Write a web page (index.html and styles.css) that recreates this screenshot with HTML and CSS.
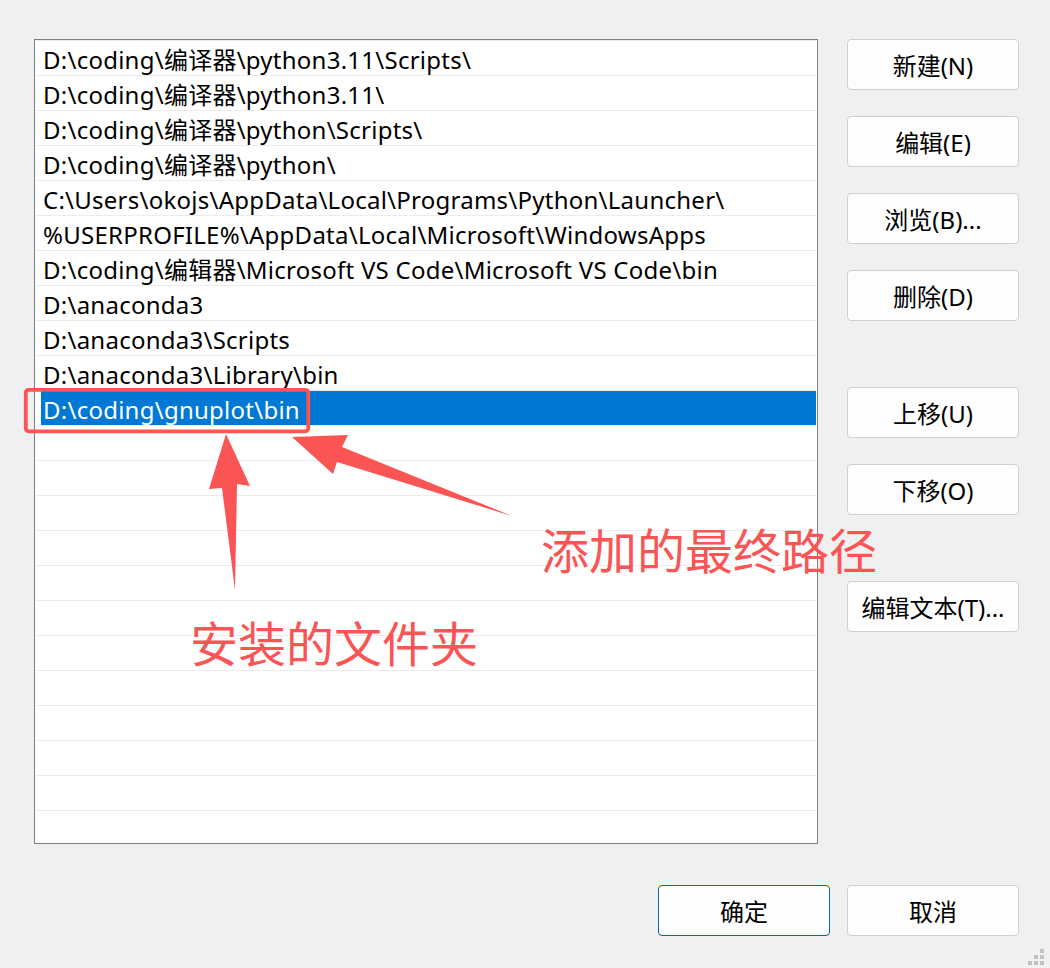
FILE: index.html
```html
<!DOCTYPE html>
<html lang="zh-CN">
<head>
    <meta charset="UTF-8">
    <title>编辑环境变量</title>
    <link rel="stylesheet" href="styles.css">
</head>
<body>
    <div class="dialog">
        <div class="main">
            <div class="path-list">
                <div class="row">D:\coding\编译器\python3.11\Scripts\</div>
                <div class="row">D:\coding\编译器\python3.11\</div>
                <div class="row">D:\coding\编译器\python\Scripts\</div>
                <div class="row">D:\coding\编译器\python\</div>
                <div class="row">C:\Users\okojs\AppData\Local\Programs\Python\Launcher\</div>
                <div class="row">%USERPROFILE%\AppData\Local\Microsoft\WindowsApps</div>
                <div class="row">D:\coding\编辑器\Microsoft VS Code\Microsoft VS Code\bin</div>
                <div class="row">D:\anaconda3</div>
                <div class="row">D:\anaconda3\Scripts</div>
                <div class="row">D:\anaconda3\Library\bin</div>
                <div class="row selected">D:\coding\gnuplot\bin</div>
                <div class="row"></div>
                <div class="row"></div>
                <div class="row"></div>
                <div class="row"></div>
                <div class="row"></div>
                <div class="row"></div>
                <div class="row"></div>
                <div class="row"></div>
                <div class="row"></div>
                <div class="row"></div>
                <div class="row"></div>
                <div class="row"></div>
            </div>

            <div class="actions">
                <div class="btn-group">
                    <button class="btn">新建(N)</button>
                    <button class="btn">编辑(E)</button>
                    <button class="btn">浏览(B)...</button>
                    <button class="btn">删除(D)</button>
                </div>
                <div class="btn-group">
                    <button class="btn">上移(U)</button>
                    <button class="btn">下移(O)</button>
                </div>
                <div class="btn-group">
                    <button class="btn">编辑文本(T)...</button>
                </div>
            </div>
        </div>

        <div class="footer">
            <button class="btn btn-default">确定</button>
            <button class="btn">取消</button>
        </div>

        <!-- 标注：红框和箭头 -->
        <svg class="marks" width="1050" height="968" viewBox="0 0 1050 968">
            <rect x="25.8" y="389.8" width="282.5" height="41.5" rx="3" fill="none" stroke="#fb5454" stroke-width="3.8"/>
            <polygon points="226,434 250,486 237,484 235,590 222,488 209,489" fill="#fb5454"/>
            <polygon points="292,437 348,435 342,447 512,516 337,462 333,474" fill="#fb5454"/>
        </svg>
        <div class="note note-path">添加的最终路径</div>
        <div class="note note-folder">安装的文件夹</div>

        <svg class="grip" width="20" height="20" viewBox="0 0 20 20">
            <rect x="12" y="1" width="4" height="4" fill="#c2c2c2"/>
            <rect x="6" y="7" width="4" height="4" fill="#c2c2c2"/>
            <rect x="12" y="7" width="4" height="4" fill="#c2c2c2"/>
            <rect x="0" y="13" width="4" height="4" fill="#c2c2c2"/>
            <rect x="6" y="13" width="4" height="4" fill="#c2c2c2"/>
            <rect x="12" y="13" width="4" height="4" fill="#c2c2c2"/>
        </svg>
    </div>
</body>
</html>
```

FILE: styles.css
```css
* {
    margin: 0;
    padding: 0;
    box-sizing: border-box;
}

body {
    background: #f0f0f0;
    font-family: "Noto Sans", "Noto Sans CJK SC", sans-serif;
    color: #000;
}

.dialog {
    position: relative;
    width: 1050px;
    height: 968px;
    padding: 39px 31px 0 34px;
    overflow: hidden;
}

.main {
    display: flex;
    gap: 29px;
}

.path-list {
    width: 784px;
    height: 805px;
    background: #fff;
    border: 1px solid #7d7f86;
    padding: 0 1px;
    overflow: hidden;
}

.row {
    height: 35px;
    border-top: 1px solid #ececec;
    padding: 2px 0 0 7px;
    font-size: 24px;
    line-height: 33px;
    letter-spacing: 0.25px;
    white-space: nowrap;
}

.row.selected {
    background: #0078d4;
    color: #fff;
    box-shadow: inset 5px 0 0 #fff;
}

.actions {
    display: flex;
    flex-direction: column;
    gap: 66px;
}

.btn-group {
    display: flex;
    flex-direction: column;
    gap: 26px;
}

.btn {
    width: 172px;
    height: 51px;
    background: #fdfdfd;
    border: 1px solid #d0d0d0;
    border-radius: 4px;
    font-family: "Noto Sans", "Noto Sans CJK SC", sans-serif;
    font-size: 24px;
    color: #000;
}

.btn-default {
    border-color: #0067c0;
}

.footer {
    display: flex;
    justify-content: flex-end;
    gap: 17px;
    margin-top: 41px;
}

.marks {
    position: absolute;
    top: 0;
    left: 0;
}

.note {
    position: absolute;
    font-family: "Noto Sans CJK SC", sans-serif;
    font-size: 48px;
    line-height: 1;
    color: #fb5454;
    white-space: nowrap;
}

.note-path {
    left: 541px;
    top: 524px;
}

.note-folder {
    left: 190px;
    top: 617px;
}

.grip {
    position: absolute;
    right: 2px;
    bottom: 0;
}
```
